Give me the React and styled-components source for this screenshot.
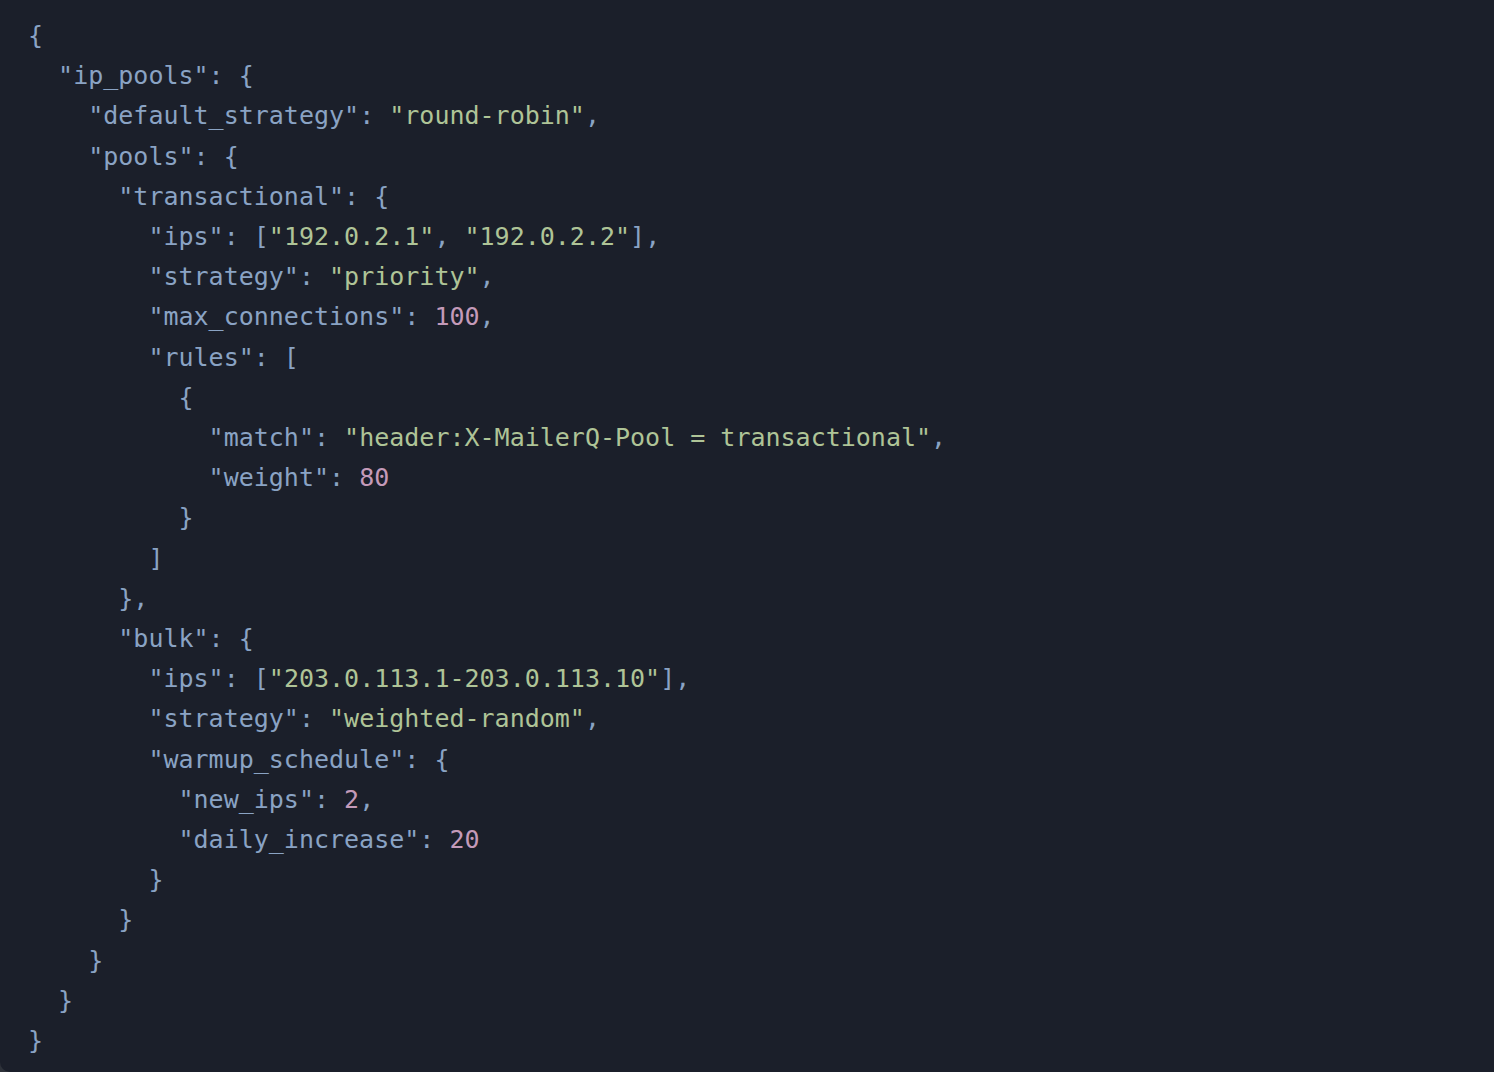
import React from 'react';
import styled, { createGlobalStyle } from 'styled-components';

const GlobalStyle = createGlobalStyle`
  html, body {
    margin: 0;
    padding: 0;
    background: #2e323a;
  }
`;

const Block = styled.pre`
  margin: 0;
  width: 1494px;
  height: 1072px;
  box-sizing: border-box;
  padding: 16px 0 0 28px;
  background: #1b1f2a;
  border-bottom-left-radius: 10px;
  font-family: "DejaVu Sans Mono", "Liberation Mono", monospace;
  font-size: 25px;
  line-height: 40.2px;
  color: #8aa3c4;
  overflow: hidden;
`;

const Line = styled.div`
  padding-left: ${(p) => p.$indent * 2}ch;
  white-space: pre;
`;

const Key = styled.span`
  color: #8aa3c4;
`;

const Str = styled.span`
  color: #afc497;
`;

const Num = styled.span`
  color: #c49ab9;
`;

const P = styled.span`
  color: #8aa3c4;
`;

const k = (t) => ({ t, c: 'k' });
const s = (t) => ({ t, c: 's' });
const n = (t) => ({ t, c: 'n' });
const p = (t) => ({ t, c: 'p' });

const lines = [
  [0, [p('{')]],
  [1, [k('"ip_pools"'), p(': {')]],
  [2, [k('"default_strategy"'), p(': '), s('"round-robin"'), p(',')]],
  [2, [k('"pools"'), p(': {')]],
  [3, [k('"transactional"'), p(': {')]],
  [4, [k('"ips"'), p(': ['), s('"192.0.2.1"'), p(', '), s('"192.0.2.2"'), p('],')]],
  [4, [k('"strategy"'), p(': '), s('"priority"'), p(',')]],
  [4, [k('"max_connections"'), p(': '), n('100'), p(',')]],
  [4, [k('"rules"'), p(': [')]],
  [5, [p('{')]],
  [6, [k('"match"'), p(': '), s('"header:X-MailerQ-Pool = transactional"'), p(',')]],
  [6, [k('"weight"'), p(': '), n('80')]],
  [5, [p('}')]],
  [4, [p(']')]],
  [3, [p('},')]],
  [3, [k('"bulk"'), p(': {')]],
  [4, [k('"ips"'), p(': ['), s('"203.0.113.1-203.0.113.10"'), p('],')]],
  [4, [k('"strategy"'), p(': '), s('"weighted-random"'), p(',')]],
  [4, [k('"warmup_schedule"'), p(': {')]],
  [5, [k('"new_ips"'), p(': '), n('2'), p(',')]],
  [5, [k('"daily_increase"'), p(': '), n('20')]],
  [4, [p('}')]],
  [3, [p('}')]],
  [2, [p('}')]],
  [1, [p('}')]],
  [0, [p('}')]],
];

const Token = ({ tok }) => {
  if (tok.c === 'k') return <Key>{tok.t}</Key>;
  if (tok.c === 's') return <Str>{tok.t}</Str>;
  if (tok.c === 'n') return <Num>{tok.t}</Num>;
  return <P>{tok.t}</P>;
};

const App = () => {
  return (
    <>
      <GlobalStyle />
      <Block>
        {lines.map(([indent, toks], i) => (
          <Line key={i} $indent={indent}>
            {toks.map((tok, j) => (
              <Token key={j} tok={tok} />
            ))}
          </Line>
        ))}
      </Block>
    </>
  );
};

export default App;
